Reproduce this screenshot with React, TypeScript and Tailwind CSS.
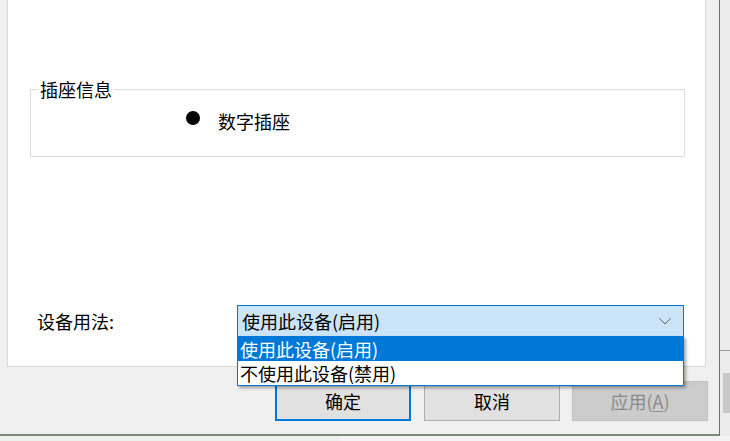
import React from "react";

const font = { fontFamily: '"Noto Sans CJK SC", "Noto Sans", sans-serif' };

export default function App() {
  return (
    <div
      className="relative w-[730px] h-[441px] overflow-hidden bg-[#f0f0f0] text-[18px] text-black"
      style={font}
    >
      {/* window */}
      <div className="flex">
        <div className="w-[720px] h-[436px] border-r border-r-[#6e6e6e] border-b-2 border-b-[#7d8a7a] bg-[#f0f0f0] flex flex-col">
          {/* tab panel */}
          <div className="ml-[7px] w-[699px] h-[367px] shrink-0 bg-white border-l border-r border-b border-[#d9d9d9] flex flex-col">
            {/* group box */}
            <div className="relative ml-[22px] mt-[89px] w-[655px] h-[68px] border border-[#dcdcdc]">
              <span className="absolute left-[8px] top-[-11px] bg-white pl-px pr-[2px] leading-[20px]">
                插座信息
              </span>
              <div className="flex items-start ml-[155px]">
                <span className="block mt-[21px] w-[14px] h-[14px] rounded-full bg-black" />
                <span className="ml-[18px] mt-[19px] leading-[24px]">数字插座</span>
              </div>
            </div>
            {/* usage row */}
            <div className="flex items-center mt-[148px]">
              <span className="ml-[29px] w-[200px] leading-[24px]">设备用法:</span>
              <div className="w-[447px] h-[32px] border border-[#0078d7] bg-[#cce4f7] flex items-center justify-between pl-[4px] pr-[12px]">
                <span className="leading-[24px]">使用此设备(启用)</span>
                <svg width="12" height="7" viewBox="0 0 12 7" fill="none">
                  <path d="M0.5 0.5 L6 6 L11.5 0.5" stroke="#5a5a5a" strokeWidth="1" />
                </svg>
              </div>
            </div>
          </div>
          {/* buttons */}
          <div className="flex mt-[14px] ml-[275px]">
            <button className="w-[136px] h-[40px] border-2 border-[#0078d7] bg-[#e1e1e1] flex items-center justify-center leading-[24px]">
              确定
            </button>
            <button className="ml-[13px] w-[136px] h-[40px] border border-[#adadad] bg-[#e1e1e1] flex items-center justify-center leading-[24px]">
              取消
            </button>
            <button className="ml-[12px] w-[136px] h-[40px] border border-[#bfbfbf] bg-[#cccccc] text-[#8a8a8a] flex items-center justify-center leading-[24px]">
              应用(<span className="underline underline-offset-2">A</span>)
            </button>
          </div>
        </div>
        <div className="w-[10px] h-[436px] bg-[#ececec] flex flex-col">
          <div className="h-[350px]" />
          <div className="h-px bg-[#9a9a9a]" />
          <div className="ml-[3px] mt-[22px] h-[40px] w-[7px] bg-[#c8c8c8]" />
        </div>
      </div>
      <div className="flex h-[5px]">
        <div className="w-[340px] bg-[#eef0ee]" />
        <div className="w-[390px] bg-[#f3f3f3]" />
      </div>

      {/* dropdown list overlay */}
      <div className="absolute left-[237px] top-[336px] w-[447px] border border-t-0 border-[#0078d7] bg-white shadow-[2px_2px_3px_rgba(0,0,0,0.35)]">
        <div className="h-[25px] bg-[#0078d7] text-white pl-[2px] flex items-center leading-[24px]">
          使用此设备(启用)
        </div>
        <div className="h-[24px] bg-white text-black pl-[2px] flex items-center leading-[24px]">
          不使用此设备(禁用)
        </div>
      </div>
    </div>
  );
}
